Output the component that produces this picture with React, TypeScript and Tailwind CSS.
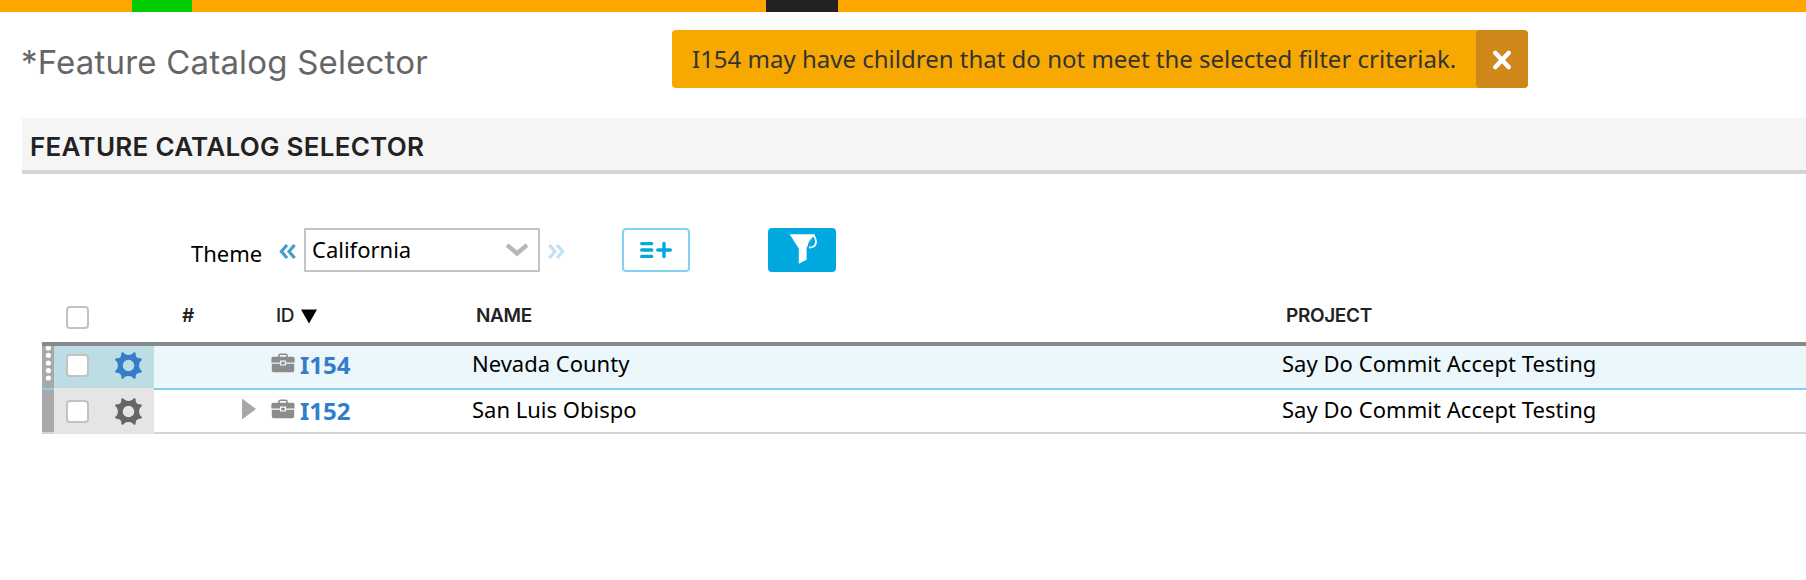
import { clsx } from "clsx";

const NOTO = "font-['Noto_Sans',sans-serif]";
const INTER = "font-['Inter',sans-serif]";

function Checkbox() {
  return <span className="block size-[23px] shrink-0 rounded-[4px] border-2 border-[#c2c2c2] bg-white" />;
}

function Gear({ className }: { className: string }) {
  return (
    <svg viewBox="-13.5 -13.5 27 27" className={clsx("size-[27px]", className)} fill="currentColor">
      <path
        fillRule="evenodd"
        d="M-6.5-13.3 Q-5-13.6-4.2-12 Q-3-10.6 0-10.6 Q3-10.6 4.2-12 Q5-13.6 6.5-13.3 Q7.4-12.8 7.2-11 Q7.4-7.6 11-7.2 Q12.8-7.4 13.3-6.5 Q13.6-5 12-4.2 Q10.6-3 10.6 0 Q10.6 3 12 4.2 Q13.6 5 13.3 6.5 Q12.8 7.4 11 7.2 Q7.4 7.6 7.2 11 Q7.4 12.8 6.5 13.3 Q5 13.6 4.2 12 Q3 10.6 0 10.6 Q-3 10.6-4.2 12 Q-5 13.6-6.5 13.3 Q-7.4 12.8-7.2 11 Q-7.4 7.6-11 7.2 Q-12.8 7.4-13.3 6.5 Q-13.6 5-12 4.2 Q-10.6 3-10.6 0 Q-10.6-3-12-4.2 Q-13.6-5-13.3-6.5 Q-12.8-7.4-11-7.2 Q-7.4-7.6-7.2-11 Q-7.4-12.8-6.5-13.3 Z M5.8 0 A5.8 5.8 0 1 0 -5.8 0 A5.8 5.8 0 1 0 5.8 0 Z"
      />
    </svg>
  );
}

function Briefcase() {
  return (
    <svg viewBox="0 0 24 20" className="h-5 w-6 shrink-0 text-[#8c8c8c]" fill="none">
      <path d="M8 5V2.6Q8 1.2 9.4 1.2H14.6Q16 1.2 16 2.6V5" stroke="currentColor" strokeWidth="1.6" />
      <path
        fill="currentColor"
        d="M2 3.8H22Q23.6 3.8 23.6 5.4V9.6H15V7.6H9V9.6H.4V5.4Q.4 3.8 2 3.8ZM.8 10.8H9V12.6H15V10.8H23.2V17.6Q23.2 19.2 21.6 19.2H2.4Q.8 19.2.8 17.6Z"
      />
      <rect x="10.2" y="8.8" width="3.6" height="2.6" fill="currentColor" />
    </svg>
  );
}

function DoubleChevron({ className, flip }: { className: string; flip?: boolean }) {
  return (
    <svg viewBox="0 0 17 15" className={clsx("h-[15px] w-[17px] shrink-0", className, flip && "-scale-x-100")} fill="none" stroke="currentColor" strokeWidth="3.2">
      <path d="M8 1L2.4 7.5L8 14M15.6 1L10 7.5L15.6 14" />
    </svg>
  );
}

type Row = { id: string; name: string; project: string; selected?: boolean; expandable?: boolean };

const ROWS: Row[] = [
  { id: "I154", name: "Nevada County", project: "Say Do Commit Accept Testing", selected: true },
  { id: "I152", name: "San Luis Obispo", project: "Say Do Commit Accept Testing", expandable: true },
];

function TableRow({ row }: { row: Row }) {
  const sel = row.selected;
  const line = sel ? "border-[#7fd3ee]" : "border-[#d4d4d4]";
  return (
    <div className={clsx("flex", sel ? "h-[46px]" : "h-[44px]")}>
      <div className={clsx("flex w-3 flex-col items-center border-b-2 bg-[#a8a8a8] bg-clip-padding", line, sel && "pt-[1px]")}>
        {sel && (
          <svg viewBox="0 0 12 40" className="h-10 w-3 shrink-0" fill="#fff">
            {[3, 10.3, 18, 25.6, 33].map((y) => (
              <circle key={y} cx="6.4" cy={y} r="2.6" />
            ))}
          </svg>
        )}
      </div>
      <div className={clsx("flex w-[100px] items-center border-b-2 border-[#e5e5e5] pl-[11.5px]", sel ? "bg-[#bcdde4] bg-clip-padding pb-[2px]" : "bg-[#e5e5e5]")}>
        <Checkbox />
        <Gear className={clsx("ml-[26px]", sel ? "text-[#337dc9]" : "text-[#666]")} />
      </div>
      <div className={clsx("flex flex-1 items-center border-b-2", line, sel && "bg-[#ebf7fb] pb-[2px]")}>
        <div className="flex w-[117px] justify-end pb-[5px] pr-[15px]">
          {row.expandable && (
            <svg viewBox="0 0 14 22" className="h-[22px] w-[14px]" fill="#a8a8a8">
              <path d="M0 .5L14 11L0 21.5Z" />
            </svg>
          )}
        </div>
        <div className="flex w-[201px] items-center">
          <span className="pb-[5px]"><Briefcase /></span>
          <span className={clsx(NOTO, "ml-[5px] text-[24px] leading-[34px] font-bold text-[#337dc9]")}>{row.id}</span>
        </div>
        <div className={clsx(NOTO, "w-[810px] pb-[4px] text-[22px] leading-[30px] text-black")}>{row.name}</div>
        <div className={clsx(NOTO, "pb-[4px] text-[22px] leading-[30px] tracking-[0.04px] text-black")}>{row.project}</div>
      </div>
    </div>
  );
}

export default function App() {
  return (
    <div className="h-[580px] w-[1806px] overflow-hidden bg-white">
      <div className="flex h-3 bg-[#ffa500]">
        <div className="ml-[132px] w-[60px] bg-[#00cc00]" />
        <div className="ml-[574px] w-[72px] bg-[#222]" />
      </div>

      <header className="flex h-[106px] items-start">
        <h1 className={clsx(INTER, "ml-[21px] w-[651px] shrink-0 pt-[30px] text-[33px] leading-10 tracking-[0.19px] text-[#666]")}>*Feature Catalog Selector</h1>
        <div className="mt-[18px] flex h-[58px] w-[856px] overflow-hidden rounded-[4px] bg-[#f7a902]">
          <p className={clsx(NOTO, "flex-1 pl-5 text-[24px] leading-[58px] whitespace-nowrap text-[#333]")}>
            I154 may have children that do not meet the selected filter criteriak.
          </p>
          <button className="flex w-[52px] items-center justify-center rounded-[4px] bg-[#cf861b]">
            <svg viewBox="0 0 20 20" className="mt-[2px] size-5" stroke="#fff" strokeWidth="4.6" strokeLinecap="round">
              <path d="M3.4 3L16.6 17M16.6 3L3.4 17" />
            </svg>
          </button>
        </div>
      </header>

      <h2 className={clsx(INTER, "ml-[22px] h-14 border-b-4 border-[#d4d4d4] bg-[#f5f5f5] pt-[3px] pl-[8px] text-[26px] leading-[52px] font-semibold tracking-[0.27px] text-[#222]")}>
        FEATURE CATALOG SELECTOR
      </h2>

      <div className="mt-[54px] flex h-11 items-center pl-[191px]">
        <span className={clsx(NOTO, "w-[88px] pt-[6px] text-[22px] leading-[30px] text-black")}>Theme</span>
        <DoubleChevron className="mt-[2px] text-[#4a9cc6]" />
        <div className="ml-[8px] flex h-11 w-[236px] items-center justify-between border-2 border-[#c4c4c4] pr-[10px] pl-[6px]">
          <span className={clsx(NOTO, "pb-[2px] text-[22px] leading-[30px] text-black")}>California</span>
          <svg viewBox="0 0 22 14" className="h-[14px] w-[22px]" fill="none" stroke="#b8b8b8" strokeWidth="4.4">
            <path d="M1 2L11 10.5L21 2" />
          </svg>
        </div>
        <DoubleChevron flip className="mt-[2px] ml-[8px] text-[#c3dff0]" />
        <button className="ml-[57px] flex h-11 w-[68px] items-center justify-center rounded-[4px] border-2 border-[#80d4f0]">
          <svg viewBox="0 0 32 18" className="mr-[1px] mb-[1px] h-[18px] w-8" stroke="#00a9e0" strokeWidth="3.4" strokeLinecap="round">
            <path d="M1.7 2.6H11.7M1.7 9H11.7M1.7 15.4H11.7M17.8 9H30.3M24 2.4V15.6" />
          </svg>
        </button>
        <button className="ml-[78px] flex h-11 w-[68px] items-center justify-center rounded-[4px] bg-[#00a9e0]">
          <svg viewBox="0 0 30 32" className="mr-[-3px] mb-[2px] h-8 w-[30px]" fill="none">
            <path d="M20 14.6Q27.6 14.6 27 8Q26.6 4.4 24.6 2.4" stroke="#fff" strokeWidth="1.8" />
            <path d="M.6 1.2H26L17.6 14.8V26.8L9.8 30.8V15.6Z" fill="#fff" />
            <path d="M24.4 4.4Q19.8 8 19.4 12.4" stroke="#00a9e0" strokeWidth="1.2" />
          </svg>
        </button>
      </div>

      <div className={clsx(INTER, "relative z-10 ml-[42px] flex h-[74px] items-center border-b-4 border-[#868a88] pt-[18px] text-[19px] leading-6 font-semibold tracking-[-0.35px] text-[#222]")}>
        <div className="w-[140px] pl-[23.5px]"><span className="block pt-[2px]"><Checkbox /></span></div>
        <div className="w-[94px]">#</div>
        <div className="flex w-[200px] items-center">
          <span className="font-medium">ID</span>
          <svg viewBox="0 0 16 15" className="ml-[7px] h-[15px] w-4" fill="#000"><path d="M0 .5H16L8 14.5Z" /></svg>
        </div>
        <div className="w-[810px]">NAME</div>
        <div>PROJECT</div>
      </div>

      <div className="-mt-[2px] ml-[42px]">
        {ROWS.map((r) => <TableRow key={r.id} row={r} />)}
      </div>
    </div>
  );
}
